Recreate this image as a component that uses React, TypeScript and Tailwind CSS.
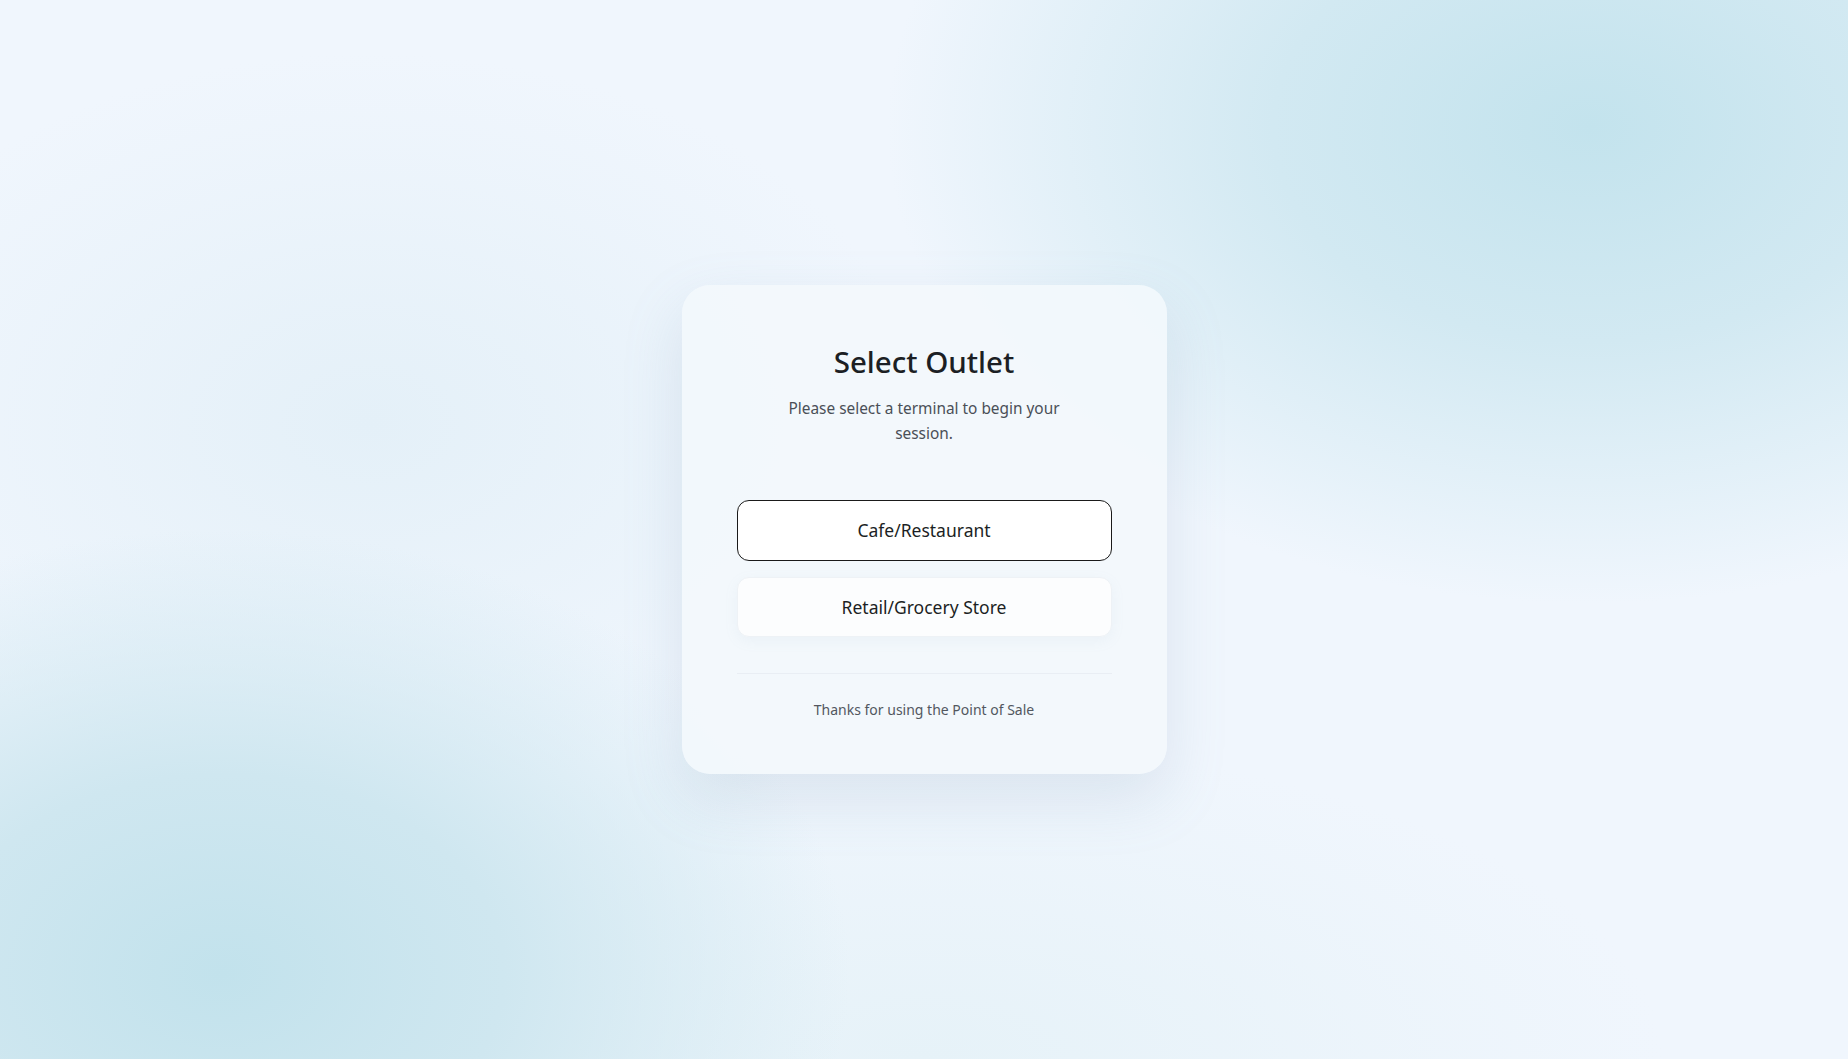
export default function App() {
  return (
    <div className="min-h-screen w-full flex items-center justify-center bg-[#f0f6fd] bg-[image:radial-gradient(ellipse_38%_45%_at_86%_12%,#c3e3ed_0%,#d2e9f2_45%,transparent_100%),radial-gradient(ellipse_34%_42%_at_12%_92%,#c2e2ec_0%,#cfe7f0_45%,transparent_100%),radial-gradient(ellipse_30%_35%_at_20%_40%,#e4f0f8_0%,transparent_100%),radial-gradient(ellipse_40%_30%_at_50%_100%,#e6f2f8_0%,transparent_100%)] font-['Noto_Sans','Open_Sans',sans-serif]">
      <div className="w-[485px] rounded-[28px] bg-[#f3f8fc]/90 shadow-[0_24px_60px_rgba(120,150,180,0.18)] px-[55px] pt-[57px] pb-[52px] flex flex-col items-center text-center">
        <h1 className="text-[29.5px] leading-10 font-medium text-[#1c1f24]">Select Outlet</h1>
        <p className="mt-[14px] max-w-[290px] text-[15.4px] leading-[25px] text-[#4a4f57]">
          Please select a terminal to begin your session.
        </p>

        <div className="mt-[54px] w-full flex flex-col gap-4">
          <button className="h-[61px] w-full rounded-xl border border-[#1a1a1a] bg-white text-[17.5px] text-[#1c1f24]">
            Cafe/Restaurant
          </button>
          <button className="h-[60px] w-full rounded-xl border border-[#eef2f6] bg-white/70 shadow-[0_4px_14px_rgba(140,160,190,0.08)] text-[17.5px] text-[#1c1f24]">
            Retail/Grocery Store
          </button>
        </div>

        <div className="mt-9 w-full border-t border-[#e9eef4]" />
        <p className="mt-6 text-[14px] leading-6 text-[#52575f]">Thanks for using the Point of Sale</p>
      </div>
    </div>
  );
}
